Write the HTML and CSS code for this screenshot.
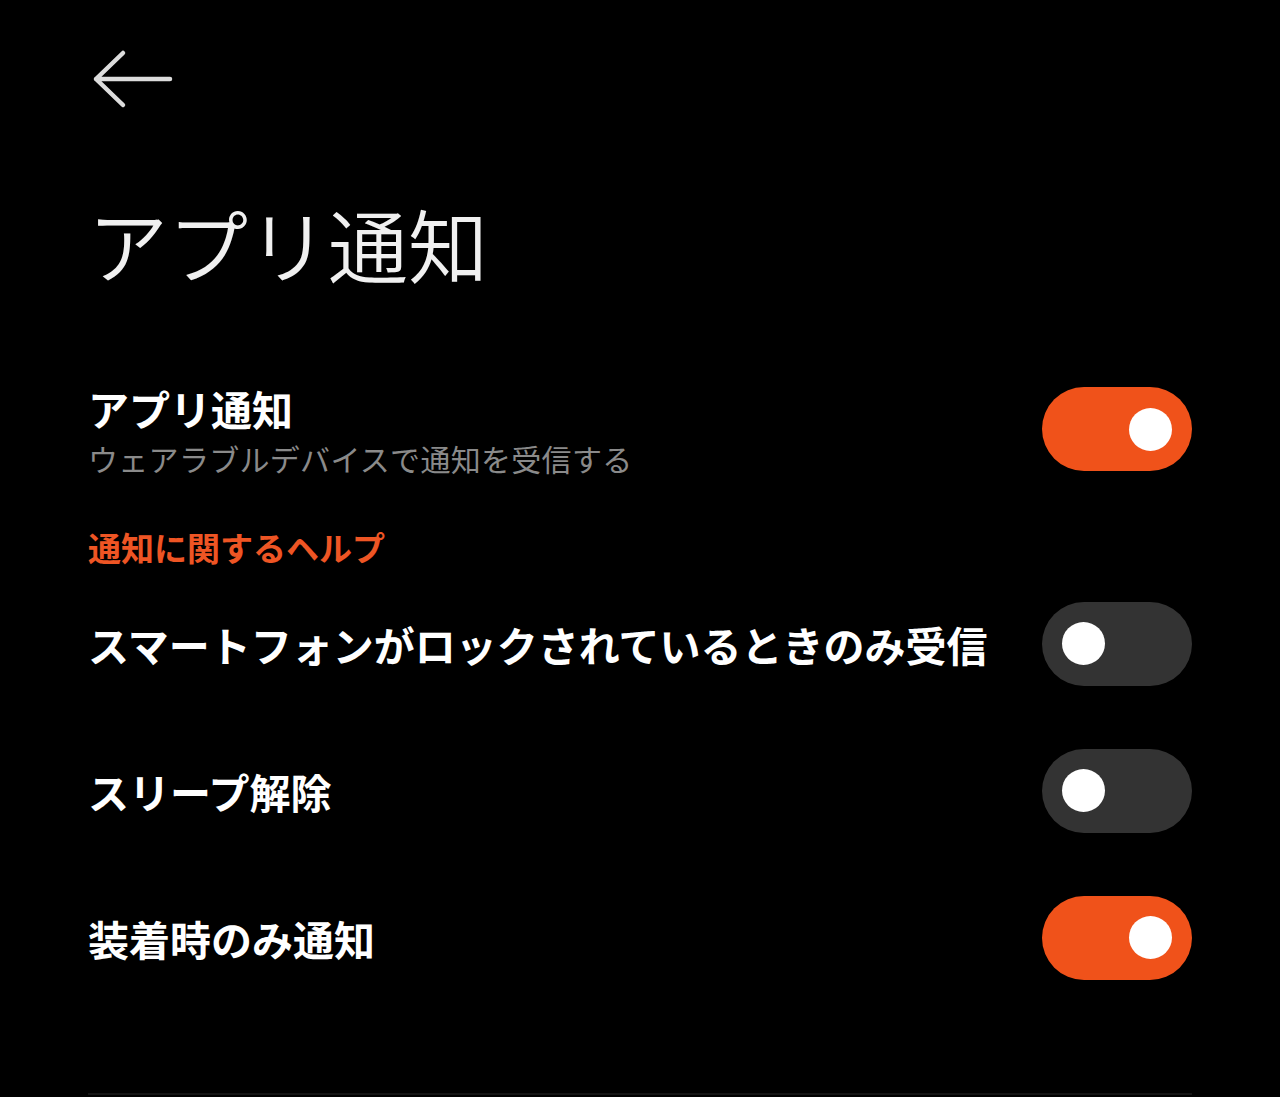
FILE: index.html
```html
<!DOCTYPE html>
<html lang="ja">
<head>
<meta charset="utf-8">
<title>アプリ通知</title>
<link rel="stylesheet" href="styles.css">
</head>
<body>
<div class="page">
  <header class="topbar">
    <svg class="back" width="90" height="66" viewBox="0 0 90 66" aria-label="戻る">
      <path d="M82 33 H8 M35 7 L8 33 L35 59" fill="none" stroke="#dcdcdc" stroke-width="4.5" stroke-linecap="round" stroke-linejoin="round"/>
    </svg>
  </header>
  <h1 class="title">アプリ通知</h1>
  <div class="row row-main">
    <div class="texts">
      <div class="label">アプリ通知</div>
      <div class="sub">ウェアラブルデバイスで通知を受信する</div>
    </div>
    <div class="toggle on"><span class="knob"></span></div>
  </div>
  <div class="section">通知に関するヘルプ</div>
  <div class="row">
    <div class="label">スマートフォンがロックされているときのみ受信</div>
    <div class="toggle"><span class="knob"></span></div>
  </div>
  <div class="row">
    <div class="label">スリープ解除</div>
    <div class="toggle"><span class="knob"></span></div>
  </div>
  <div class="row">
    <div class="label">装着時のみ通知</div>
    <div class="toggle on"><span class="knob"></span></div>
  </div>
  <div class="spacer"></div>
  <div class="bottom-line"></div>
</div>
</body>
</html>
```
FILE: styles.css
```css
* { box-sizing: border-box; }
html, body {
  margin: 0;
  padding: 0;
  background: #000;
}
body {
  font-family: "Noto Sans CJK JP", "Noto Sans", sans-serif;
  color: #fff;
}
.page {
  width: 1280px;
  height: 1097px;
  padding: 0 88px;
  display: flex;
  flex-direction: column;
}
.topbar {
  height: 112px;
  padding-top: 46px;
}
.back {
  display: block;
}
.title {
  margin: 90px 0 0 0;
  font-size: 80px;
  line-height: 80px;
  font-weight: 350;
  color: #f0f0f0;
  letter-spacing: 0;
}
.row {
  height: 147px;
  display: flex;
  align-items: center;
  justify-content: space-between;
}
.row-main {
  height: 94px;
  margin-top: 102px;
}
.texts {
  display: flex;
  flex-direction: column;
  gap: 6px;
}
.label {
  font-size: 41px;
  line-height: 48px;
  font-weight: 700;
  color: #fff;
}
.sub {
  font-size: 30px;
  line-height: 40px;
  font-weight: 400;
  color: #8a8a8a;
  letter-spacing: 0.3px;
}
.section {
  margin-top: 49px;
  margin-bottom: 3px;
  font-size: 33px;
  line-height: 40px;
  font-weight: 700;
  color: #ee5524;
}
.toggle {
  width: 150px;
  height: 84px;
  border-radius: 42px;
  background: #333;
  display: flex;
  align-items: center;
  padding: 0 20px;
  flex-shrink: 0;
}
.row-main .toggle {
  margin-top: -4px;
}
.toggle.on {
  background: #f0521a;
  justify-content: flex-end;
}
.knob {
  width: 43px;
  height: 43px;
  border-radius: 50%;
  background: #fff;
}
.spacer { flex: 1; }
.bottom-line {
  height: 2px;
  background: #141414;
  margin-bottom: 2px;
}
```
